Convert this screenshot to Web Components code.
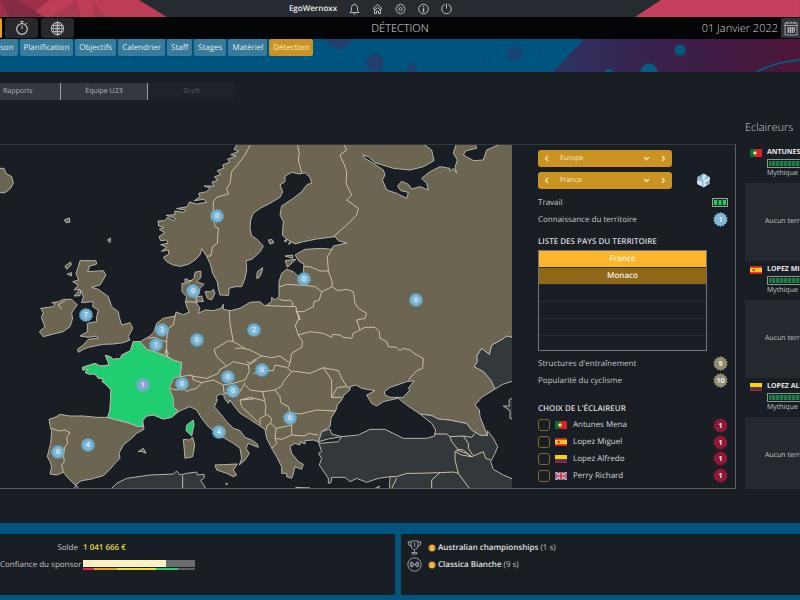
<!DOCTYPE html>
<html lang="fr">
<head>
<meta charset="utf-8">
<title>Détection</title>
<style>
html,body{margin:0;height:100%;background:#191e25}
body{font-family:"Open Sans","Noto Sans",sans-serif;font-size:8px;line-height:12px;color:#c3c5c8;overflow:hidden;text-rendering:geometricPrecision}
</style>
</head>
<body>
<detection-page></detection-page>
<script>
const define=(name,render,setup)=>customElements.define(name,class extends HTMLElement{
  connectedCallback(){
    if(this.shadowRoot)return;
    const root=this.attachShadow({mode:'open'});
    root.innerHTML='<style>*{box-sizing:border-box}button,select,input{font:inherit;color:inherit;text-rendering:inherit;margin:0;border:0;padding:0;background:none}</style>'+render(this);
    if(setup)setup(this,root);
  }
});
const gear=(cx,cy,r,teeth)=>{
  let d='';
  for(let i=0;i<teeth*2;i++){
    const a=i*Math.PI/teeth,q=i%2?r*.84:r;
    d+=(i?'L':'M')+(cx+q*Math.sin(a)).toFixed(2)+' '+(cy-q*Math.cos(a)).toFixed(2);
  }
  return d+'Z';
};

define('level-badge',el=>{
  const c={blue:['#7fb4d3','#a9d0e5'],sand:['#8f8970','#bcb595'],red:['#8d1736','#b01f45']}[el.getAttribute('tone')];
  return `<style>:host{display:block;width:15px;height:15px}svg{display:block}</style>
  <svg width="15" height="15" viewBox="0 0 15 15"><path d="${gear(7.5,7.5,7.4,14)}" fill="${c[0]}"/><circle cx="7.5" cy="7.5" r="4.6" fill="${c[0]}" stroke="${c[1]}" stroke-opacity=".35" stroke-width=".7"/>
  <text x="7.5" y="10" text-anchor="middle" font-size="7" font-weight="700" fill="#f2f2ea">${el.getAttribute('value')}</text></svg>`;
});

const flags={
  pt:'<path fill="#d8232c" d="M0 0h12v9H0z"/><path fill="#0d6b3c" d="M0 0h5v9H0z"/><circle cx="5" cy="4.5" r="2" fill="#e8cf3a"/><circle cx="5" cy="4.5" r="1" fill="#e9e3e3"/>',
  es:'<path fill="#d3202a" d="M0 0h12v9H0z"/><path fill="#fcc71f" d="M0 2h12v5H0z"/><path fill="#b2532c" d="M2.5 3.2h2.4v2.6H2.5z"/>',
  co:'<path fill="#fbd116" d="M0 0h12v5H0z"/><path fill="#263a80" d="M0 5h12v2H0z"/><path fill="#b71c38" d="M0 7h12v2H0z"/>',
  gb:'<path fill="#27407f" d="M0 0h12v9H0z"/><path stroke="#eee" stroke-width="2" d="M0 0l12 9M12 0L0 9"/><path stroke="#cc2338" stroke-width=".7" d="M0 0l12 9M12 0L0 9"/><path stroke="#eee" stroke-width="3" d="M6 0v9M0 4.5h12"/><path stroke="#cc2338" stroke-width="1.6" d="M6 0v9M0 4.5h12"/>'
};
define('flag-icon',el=>`<style>:host{display:block;width:12px;height:8px}svg{display:block}</style>
<svg width="12" height="8" viewBox="0 0 12 9" preserveAspectRatio="none">${flags[el.getAttribute('code')]}</svg>`);

define('top-bar',()=>`<style>
:host{display:grid;grid-template-columns:1fr auto 1fr;background:#262b32;height:17px;align-items:center}
.art{display:block;height:17px;width:100%}
nav{display:flex;align-items:center;gap:12px;padding-right:59px}
strong{color:#eee;font-weight:600}
button{display:block;width:11px;height:12px}
button svg{display:block;width:11px;height:12px;fill:none;stroke:#b9bbbd;stroke-width:1}</style>
<svg class="art" viewBox="0 0 600 17" preserveAspectRatio="xMinYMin slice"><path fill="#bd3d59" d="M0 0h139l28 17H0z"/><path fill="#9d3149" d="M0 0h50L28 17H0z"/><path fill="#842c44" d="M0 0h18L44 17H10z"/><path fill="#ad3852" d="M76 0l-24 17h29zM92 0l14 17H94z"/></svg>
<nav><strong>EgoWernoxx</strong>
<button aria-label="Notifications"><svg viewBox="0 0 11 12"><path d="M1 9.5h9L8.500 7.500V4.500a3 3 0 0 0-6 0v3zM4.500 11h2M5.500 1V.5"/></svg></button>
<button aria-label="Accueil"><svg viewBox="0 0 11 12"><path d="M.8 6L5.500 1.500 10.200 6M2.500 5.500v5h2v-2.500h2v2.500h2v-5M3 7l2.500-2.500L8 7"/></svg></button>
<button aria-label="Options"><svg viewBox="0 0 11 12"><path d="M4.600 1h1.800l.4 1.600 1.400-.8 1.200 1.200-.8 1.400 1.600.7v1.800l-1.600.7.8 1.400-1.200 1.200-1.400-.8-.4 1.600H4.600l-.4-1.600-1.400.8L1.600 9l.8-1.400L.8 6.900V5.100l1.600-.7L1.600 3l1.200-1.200 1.400.8z" stroke-width=".8"/><circle cx="5.500" cy="6" r="1.500"/></svg></button>
<button aria-label="Informations"><svg viewBox="0 0 11 12"><circle cx="5.500" cy="6" r="4.800"/><path d="M5.500 5.200v4M5.500 3v1.200" stroke-width="1.500"/></svg></button>
<button aria-label="Quitter"><svg viewBox="0 0 11 12"><path d="M3.800 1.500a4.800 4.800 0 1 0 3.400 0M5.500.5v5"/></svg></button></nav>
<svg class="art" viewBox="0 0 600 17" preserveAspectRatio="xMaxYMin slice"><path fill="#c5405e" d="M435 17L461 0h139v17z"/></svg>`);

define('title-bar',()=>`<style>
:host{display:grid;grid-template-columns:1fr auto 1fr;background:#040506;height:22px;align-items:center;color:#d2d3d4}
.l,.r{display:flex;align-items:center}.l{gap:3px}
button{width:33px;height:20px;background:#26282b;border-radius:3px;display:grid;place-items:center}
.on{width:2px;background:#e5a21d;border-radius:0 2px 2px 0}
svg{fill:none;stroke:#c4c5c6}
h1{font-size:11px;line-height:16px;font-weight:300;margin:0;padding-top:2px;color:#e0e0e0}
.r{justify-content:flex-end;gap:3px;font-size:11px;line-height:16px;font-weight:300}
.r span{padding-top:2px}
.cal{width:19px;border-radius:2px 0 0 2px;background:#303236}</style>
<div class="l"><button class="on" aria-label="Équipe"></button>
<button aria-label="Chronomètre"><svg width="14" height="16" viewBox="0 0 14 16"><circle cx="7" cy="9" r="5.300" stroke-width="1.200"/><path d="M7 9V5.500M5.500 1.500h3M7 1.500v2M11 4l1-1"/></svg></button>
<button aria-label="Monde"><svg width="15" height="15" viewBox="0 0 15 15"><circle cx="7.500" cy="7.500" r="6.200"/><path d="M7.500 0v15M6 2v11M9 2v11M1.500 7.500h12M2.500 4.500h10M2.500 10.500h10M4 3q-2 4.500 0 9M11 3q2 4.500 0 9" stroke-width=".8"/></svg></button></div>
<h1>DÉTECTION</h1>
<div class="r"><span>01 Janvier 2022</span><button class="cal" aria-label="Calendrier"><svg width="14" height="15" viewBox="0 0 14 15"><path d="M1 2h12v12H1zM1 4.500h12M3.500.5v2M7 .5v2M10.500.5v2M3 7h8M3 9h8M3 11h8M4.500 6v6M6.500 6v6M8.500 6v6M10.500 6v4" stroke-width=".8"/></svg></button></div>`);

define('nav-band',()=>`<style>
:host{display:block;height:33px;background:#00557f;position:relative;overflow:hidden}
svg{position:absolute;right:0;top:0;height:33px;width:800px}
nav{position:relative;display:flex;gap:2px}
button{height:17px;padding:0 4px;border-radius:2px;background:#397b9a;color:#e2eaef;font-weight:500;white-space:nowrap}
button:first-child{padding-left:0}.on{background:#cb9321;color:#f5eedc}</style>
<svg viewBox="0 0 800 33"><defs><linearGradient id="g"><stop offset="0" stop-color="#2c3362"/><stop offset=".35" stop-color="#37244f"/><stop offset=".8" stop-color="#45183f"/><stop offset="1" stop-color="#4d1738"/></linearGradient></defs>
<path d="M553 33L584 0h216v33z" fill="url(#g)"/><g fill="#22406f"><circle cx="339" cy="-3" r="13"/><circle cx="375" cy="24" r="9"/><circle cx="412" cy="29" r="5"/><circle cx="515" cy="14" r="8" opacity=".65"/><circle cx="484" cy="21" r="2" opacity=".6"/><circle cx="541" cy="14" r="2" opacity=".6"/></g>
<g fill="#075a80"><circle cx="680" cy="11" r="5.500"/><circle cx="649" cy="33" r="8.500"/><circle cx="609" cy="35" r="5"/></g><path d="M756 33q22-11 44-12" stroke="#0b577c" stroke-width="2" fill="none"/></svg>
<nav><button>son</button><button>Planification</button><button>Objectifs</button><button>Calendrier</button><button>Staff</button><button>Stages</button><button>Matériel</button><button class="on">Détection</button></nav>`);

define('sub-tabs',()=>`<style>:host{display:flex;gap:0}
button{height:17px;width:87px;background:#343941;color:#b3b5b9;border-right:1px solid #9a9da1;font-size:7px}
.a{width:61px;text-align:left;padding-left:3px}.d{background:#1e232a;color:#555a61;border:0;border-radius:0 3px 3px 0}</style>
<button class="a">Rapports</button><button>Équipe U23</button><button class="d" disabled>Draft</button>`);

/* Map data: each string is a run of x,y pairs relative to one of the four atlas tiles. */
const tiles={A:[0,0],B:[0,510],C:[750,0],D:[750,510]};
const trace=(...runs)=>runs.map(s=>{
  const [ox,oy]=tiles[s[0]],n=s.slice(1).trim().split(/[\s,]+/).map(Number);let o='';
  for(let i=0;i<n.length;i+=2)o+=(n[i]+ox)+' '+(n[i+1]+oy)+' ';
  return o;
}).join('');
const area=(...r)=>'M'+trace(...r)+'Z',line=(...r)=>'M'+trace(...r);
const mainland=area(
 'A712,12 702,28 716,34 692,44 708,48 682,58 690,66 668,75 672,84 652,92 662,104 644,110 652,122 636,126 642,138 612,138 630,144 620,155 596,160 600,170 583,182 612,178 620,187 590,192 568,186 562,200 530,206 558,210 552,217 524,213 525,224 498,226 526,235 520,242 503,232 494,242 474,243 476,258 492,262 478,268 494,278 477,290 482,302 500,300 504,310 482,314 500,322 484,334 506,330 506,343 490,352 500,365 520,375 540,379 565,373 585,360 600,345 605,325 612,338 620,348 632,375 638,400 652,425 655,445 660,465 686,466 687,445 705,440 725,440 735,415 740,390 738,362 755,358 770,345 780,335',
 'C40,318 20,297 5,287 0,265 2,240 10,220 30,205 60,190 90,172 98,155 90,135 105,125 105,108 125,97 150,102 165,98 180,112 185,130 172,133 155,155 130,175 95,198 90,225 100,245 97,285 110,297 135,312 160,305 200,297 255,290 265,302 290,309 250,318 245,328 215,325 165,328 135,345 148,365 162,372 160,395 163,410 145,410 130,395 110,388 95,400 87,425 87,470 75,480 65,472 65,485 45,498 30,485 0,487',
 'A745,490 720,505 690,512 670,508 670,493 663,505 640,512 615,510 595,520 600,505 590,490 588,475 598,460 600,445 612,433 590,425 603,412 602,393 585,397 582,415 572,423 555,416 555,428 577,420 560,432 546,430 546,455 560,470 556,485 562,505 568,516 550,524 528,516 526,528 490,535',
 'B470,40 462,65 450,78 420,95 400,95 395,110 392,122 365,135 362,145 340,148 330,140 316,136 328,165 300,168 285,160 248,172 248,180 265,178 255,187 265,192 285,192 295,205 310,206 306,214 325,230 333,240 330,300 323,322 290,322 250,318 210,318 180,313 165,322 147,328 150,345 155,365 152,400 142,440 150,455 155,470 150,492 170,495 190,487 205,505 225,525 245,512 270,508 310,497 330,478 345,460 360,445 357,430 370,405 395,385 410,370 432,358 430,345 428,332 440,318 460,315 490,327 515,322 535,305 550,298 570,290 590,300 605,325 625,350 650,370 680,388 700,400 720,415 725,445 718,465 735,450 748,430 738,415 745,400 765,408 775,412 772,402 755,390 735,382 720,362 700,355 680,335 660,310 643,290 652,270 648,260 660,252 672,255 673,265 685,280 690,270 700,285 720,310 745,325 775,345',
 'D45,358 50,385 65,415 80,440 95,470 95,490 110,490 110,500 125,505 130,490 135,470 155,478 160,463 145,455 125,430 120,410 135,400 150,405 150,395 165,402 165,392 190,390 205,395 215,365 240,350 243,325 258,300 262,285 275,270 282,255 300,240 300,230 318,225 335,235 375,242 350,255 365,280 380,288 400,275 430,268 445,265 470,285 510,312 545,316 565,327 600,330 650,340 665,360 690,375 712,377 700,345 690,320 688,300 675,285 695,262 735,237 722,210 700,185 672,170 682,155 680,138 695,115 718,133 725,105 750,92 770,78 790,82','C790,5 0,5');
const france=area('B400,95 395,110 392,122 365,135 362,145 340,148 330,140 316,136 328,165 300,168 285,160 248,172 248,180 265,178 255,187 265,192 285,192 295,205 310,206 306,214 325,230 333,240 330,300 323,322 350,330 380,337 410,348 428,350 428,332 440,318 460,315 490,327 515,322 535,303 520,290 520,265 508,235 520,205 540,200 545,158 520,150 500,140 470,128 440,118 420,95');
const islands=[
 'A240,362 288,362 290,372 265,380 268,386 262,395 310,392 318,405 300,435 275,442 295,448 325,470 335,500 355,515 358,532','B365,45 390,38 398,55 385,80 390,90 370,98 340,102 310,103 285,108 265,112 250,118 235,127 232,118 250,105 265,88 295,85 290,78 265,82 240,78 262,65 262,40 290,35','A290,530 295,510 278,500 280,485 245,488 250,470 242,450 240,467 222,468 240,448 222,450 235,435 218,425 236,420 228,400 235,380|',
 'A222,508 215,520','B218,25 210,50 190,65 160,72 130,80 118,65 135,50 125,25','A125,530 130,518 122,505 160,500 165,490 155,488 175,485 190,478 215,478 232,495 222,508|',
 'A-5,85 12,85 18,100 35,110 40,128 32,145 15,158 -5,158|','A193,240 208,234 210,246 198,248|','A322,300 332,294 330,308|','A195,378 212,366 214,375 200,388|','A202,402 215,398 214,408|',
 'A615,455 632,455 640,448 645,460 635,480 622,475|','A585,472 605,468 610,485 592,483|','C20,415 22,395 38,383 35,398 27,413|','C106,362 138,358 112,382|','C105,348 128,345 128,355|','C55,300 65,298 72,308 60,312|','C102,302 112,298 108,306|','C115,312 122,303 120,312|',
 'B550,388 568,390 578,382 584,405 578,440 555,445|','B645,465 712,462 700,480 710,495 700,500 680,490 650,480|','B415,425 430,415 438,430 425,424|','B678,520 682,520 682,523 678,523|','D137,532 180,534 150,537|','D370,538 390,528 380,538|'].join(';;').split('|').map(s=>s.split(';;').filter(Boolean)).filter(a=>a.length).map(a=>area(...a)).join('');
const outer=[
 area('D205,395 210,400 265,395 275,380 325,375 360,358 405,358 430,370 460,385 530,385 553,378 557,360 545,340 510,312 545,316 565,327 600,330 650,340 665,360 690,375 712,377 712,362 730,385 743,410 735,430 722,455 730,478 760,495 790,508 790,545 418,545 420,500 385,505 350,517 320,505 300,515 285,502 245,502 243,518 235,520 235,505 225,490 208,465 215,445 205,430 215,425'),
 area('D205,395 215,365 240,357 245,372 275,380 235,387'),
 area('D790,82 770,78 750,92 725,105 718,133 695,115 680,138 682,155 672,170 700,185 722,210 735,237 760,222 790,213'),
 area('D790,262 777,270 778,288 760,288 780,302 780,325 790,328'),
 area('B325,545 350,520 380,505 450,495 520,492 530,483 540,495 560,490 590,486 592,495 612,493 613,503 602,512 615,530 612,545'),area('B218,545 228,525 243,545')].join('');
const seas=[area('C515,8 545,30 552,62 520,80 480,90 430,85 375,68 355,50 338,45 345,55 370,70 400,90 405,105 397,120 410,150 440,160 470,175 475,157 452,152 443,138 455,124 475,133 485,147 510,140 535,150 530,130 515,115 540,95 570,80 600,85 600,95 610,85 620,100 615,82 622,60 610,40 620,8'),
 area('C675,8 680,25 648,32 640,45 670,62 700,60 710,30 760,8'),
 area('D403,245 420,232 450,222 470,215 492,212 475,235 480,240 470,250 460,262 420,262 405,255')].join('');
const borders=[
 ['A752,12 735,45 712,75 695,95 690,130 680,145 685,162 650,172 640,185 640,225 645,260 655,265 652,310 638,320 632,348 620,348'],['C142,12 148,40 145,60 155,98'],['C280,8 290,30 270,45 285,80 290,95 288,130 305,165 290,180 325,205 320,225 290,255 250,290'],
 ['C248,325 232,350 235,393 245,420 247,440 215,455 195,440 165,436 110,433 87,441'],['C163,380 180,380 210,393 235,393'],['C215,455 208,480 192,485 190,500 160,515 140,515 138,500 50,497'],['C87,478 105,482 120,480 128,487 128,500'],
 ['C140,515 150,540','D138,0 148,20 136,48 145,75 158,95 155,112 125,130 120,160 115,172'],['D145,75 180,65 220,70 245,82 248,73 270,75 280,82 305,85 310,70 330,60'],['C247,440 262,452 290,448 310,455 315,490 325,505 350,520 345,535 320,540','D330,60'],
 ['D330,60 345,52 375,52 388,65 390,85 410,95 415,110 440,112 450,122 460,115 480,120 495,132 520,145 518,175 500,182 475,210'],
 ['D-45,115 -20,115 0,120 35,138 65,143 90,138 120,160'],['D35,138 10,152 0,160 -10,155'],['D10,192 30,182 70,182 75,165 110,172 125,185 100,215 95,228 75,240 38,245 0,240 -15,225'],
 ['D125,183 180,190 220,173 265,182 275,205 290,230 300,235'],['D220,173 245,210 245,262 275,262'],['D245,262 262,232 290,230'],['D75,240 90,260 92,278 115,290 120,308 150,312 200,300 258,303'],['D120,308 125,345 125,375'],
 ['D38,245 48,290 45,310 65,325 62,340 78,355 75,385 95,388 125,375 165,378 175,370 205,375'],['D48,315 30,325 30,345'],['D62,340 52,345 48,360'],['D78,355 122,346'],['D75,385 80,400 65,415'],['D-30,270 0,262 42,272'],['B720,270 725,290 775,337'],['B720,270 760,267'],
 ['B526,15 520,45 505,55 500,90 500,138'],['B445,85 465,82 480,90 500,95'],['B420,95 440,118 470,128 500,138 520,150 545,158 540,200'],['B495,132 498,118 505,130 500,138'],
 ['B540,200 575,195 580,210 605,218 590,235 570,240 560,245 550,235 530,240 508,235'],['B575,198 620,205 655,190 660,178 680,168'],['B605,218 640,210 670,225'],['A688,510','B690,40 700,95 685,92 660,108 642,118 650,140 680,168 700,155 745,165 770,150'],['B700,95 735,115'],
 ['B745,165 748,185 735,210 700,220 670,225 672,250 700,250 720,245 735,218'],['B323,322 350,330 380,337 410,348 428,350'],['B155,355 175,363 195,360 210,368 200,382 203,400 195,410 190,435 193,455 185,465 190,487'],['A558,485 595,487'],['A185,508 175,495 195,482'],
 ['B548,497 548,540'],['D553,372 590,372 600,380 605,395 625,420 615,425 615,450 625,490 660,538'],['D600,380 640,378 665,382 675,370'],['D640,378 655,400 655,415 668,435'],['D620,420 650,430 665,440 700,425 707,445 722,450'],['D615,425 635,435 665,440 640,420 625,418'],['D420,500 440,500 470,490 500,490 570,488 610,486 625,490'],['D570,488 545,510 545,538'],['D425,535 440,505']].map(a=>line(...a)).join('');
const pins=[[217,216,0],[193,291,0],[304,279,0],[416,300,0],[86,315,7],[162,330,3],[156,345,1],[197,340,0],[254,330,2],[143,385,1],[182,384,0],[228,377,0],[262,370,0],[233,391,0],[290,418,0],[219,432,4],[88,445,4],[58,452,0]];
define('europe-map',()=>`<style>:host{display:block;overflow:hidden;min-width:0}svg{display:block;width:100%;height:100%}
path{stroke-linejoin:round}text{font-weight:600;fill:#eef6fb;font-size:20px;text-anchor:middle}</style>
<svg viewBox="0 15 1536 1032" preserveAspectRatio="xMinYMin slice" role="img" aria-label="Europe"><g stroke="#b4b3aa" stroke-width="3">
<path d="${outer}" fill="#33383b"/><path d="${mainland}${islands}" fill="#6b6551"/><path d="${seas}" fill="#191e25"/><path d="${borders}" fill="none" stroke="#c9c1a5"/>
<path d="${france}${area('B580,330 582,345 575,378 558,362 560,345')}" fill="#20cd70"/></g>
${pins.map(([x,y,n])=>`<path d="${gear(x*3,(y-140)*3,22,14)}" fill="#6badd0" fill-opacity=".95"/><circle cx="${x*3}" cy="${(y-140)*3}" r="14" fill="${x==143?'#8da5ce':'#82b9d8'}"/><text x="${x*3}" y="${(y-140)*3+7}">${n}</text>`).join('')}</svg>`);

define('gold-picker',el=>`<style>:host{display:flex;align-items:center;background:#cb9321;border-radius:3px;height:17px;color:#f7edd7}
button{width:17px;height:17px;display:grid;place-items:center}select{appearance:none;flex:1;min-width:0;height:17px;padding:1px 0 0 5px;outline:0;font-size:7px}
svg{fill:none;stroke:#f5e6bd;stroke-width:1.300}.v{pointer-events:none;margin-right:5px}</style>
<button aria-label="Précédent"><svg width="5" height="7"><path d="M4 1L1.500 3.500 4 6"/></svg></button>
<select aria-label="${el.getAttribute('label')}"><option>${el.getAttribute('value')}</option></select>
<svg class="v" width="7" height="5"><path d="M1 1l2.500 2.500L6 1"/></svg>
<button aria-label="Suivant"><svg width="5" height="7"><path d="M1 1l2.500 2.500L1 6"/></svg></button>`);

define('territory-panel',()=>`<style>
:host{display:block;padding:5px 7px 0 26px}
.pick{display:grid;grid-template-columns:134px auto 1fr;column-gap:24px;row-gap:5px}
.pick gold-picker{grid-column:1}.pick button{align-self:center;grid-row:2;grid-column:2}.pick svg{display:block}
.row{display:flex;justify-content:space-between;align-items:center;height:17px}
.first{margin-top:5px}
h2{font-size:8px;line-height:12px;font-weight:600;margin:0;color:#d8d9da}
.t1{margin-top:8px}.t2{margin:14px 0 2px}
.list{width:169px;height:101px;margin:2px 0 4px;border:1px solid #73777c}
table{width:100%;border-spacing:0;text-align:center;font-weight:600;color:#f5f0e2;table-layout:fixed}
td{padding:0;height:17px;line-height:12px;border-bottom:1px solid #262b32}
tr:last-child td{height:14px;border:0}
.y td{background:#fdb62a}.b td{background:#8e6817}
ul{list-style:none;margin:0;padding:0;display:grid;grid-template-rows:repeat(4,1fr);height:67px}
li{display:flex;align-items:center}label{display:flex;align-items:center;flex:1;gap:5px;color:#d7d8da}label flag-icon{margin-right:1px}
input{appearance:none;width:12px;height:12px;border:1px solid #80672c;border-radius:3px}
</style>
<div class="pick"><gold-picker label="Continent" value="Europe"></gold-picker><gold-picker label="Pays" value="France"></gold-picker>
<button aria-label="Au hasard"><svg width="15" height="15" viewBox="0 0 15 15"><path fill="#8fbbd4" d="M7.500.5l6.200 3.500v7l-6.200 3.500L1.300 11V4z"/><path fill="#d5e6ef" d="M7.500.5l3 1.700-3 5.300-2-3 2-1.500zM7.500 7.500l6.200-3.500v3l-3 1.500-.5 4L7.500 14.500zM1.300 7l3 1 2 2-1 3-4-2z"/><path fill="#4e87ae" d="M3.500 4l2-1v2zM9 10l2-1v2z"/></svg></button></div>
<div class="row first"><span>Travail</span><svg width="16" height="9"><path d="M.5.5h15v8H.500z" fill="#10341f" stroke="#9ba7a0"/><path d="M2 2h3v5H2zM6.500 2h3v5h-3zM11 2h3v5h-3z" fill="#28c966"/></svg></div>
<div class="row"><span>Connaissance du territoire</span><level-badge tone="blue" value="1"></level-badge></div>
<h2 class="t1">LISTE DES PAYS DU TERRITOIRE</h2>
<div class="list"><table aria-label="Pays du territoire"><tr class="y"><td>France</td></tr><tr class="b"><td>Monaco</td></tr><tr><td></td></tr><tr><td></td></tr><tr><td></td></tr><tr><td></td></tr></table></div>
<div class="row"><span>Structures d'entraînement</span><level-badge tone="sand" value="9"></level-badge></div>
<div class="row"><span>Popularité du cyclisme</span><level-badge tone="sand" value="10"></level-badge></div>
<h2 class="t2">CHOIX DE L'ÉCLAIREUR</h2>
<ul>${[['pt','Antunes Mena'],['es','Lopez Miguel'],['co','Lopez Alfredo'],['gb','Perry Richard']].map(([f,n])=>`<li><label><input type="checkbox"><flag-icon code="${f}"></flag-icon>${n}</label><level-badge tone="red" value="1"></level-badge></li>`).join('')}</ul>`);

define('scout-card',el=>`<style>:host{display:block;height:117px;flex:none;overflow:hidden;white-space:nowrap;font-size:7px}
.h{display:grid;grid-template-columns:12px 1fr;column-gap:5px;padding:3px 0 0 5px;height:39px;align-content:start;align-items:center}
b{font-weight:700;color:#e6e6e7}.g{grid-column:2;height:9px;border:1px solid #8a9a91;border-right:0;background:repeating-linear-gradient(90deg,#1d7c48 0 3px,#124a2e 3px 4px);background-clip:content-box;padding:1px}
.m{grid-column:2}.e{background:#242930;height:78px;display:flex;align-items:center;padding-left:20px}</style>
<div class="h"><flag-icon code="${el.getAttribute('flag')}"></flag-icon><b><slot></slot></b><div class="g"></div><span class="m">Mythique</span></div><div class="e">Aucun territoire</div>`);

define('finance-panel',()=>`<style>:host{display:grid;grid-template-columns:78px auto;column-gap:5px;row-gap:5px;align-content:start;background:#191e25;padding:8px 0}
span{text-align:right;white-space:nowrap}b{color:#e2d84c;font-weight:600}
.bar{width:112px;padding-top:1px}.v{height:7px;background:linear-gradient(90deg,#fdf1c4 74%,#6b6c6d 74%)}
.s{height:2px;margin-top:1px;background:linear-gradient(90deg,#d42b55 10%,#dba629 10% 30%,#e9dc3e 30% 65%,#2fc96e 65% 85%,#596067 85%)}</style>
<span>Solde</span><b>1 041 666 €</b><span>Confiance du sponsor</span><div class="bar" role="meter" aria-label="Confiance du sponsor" aria-valuenow="74"><div class="v"></div><div class="s"></div></div>`);

define('race-list',()=>`<style>:host{display:block;background:#191e25;padding:5px 6px}
div{display:flex;align-items:center;height:17px;white-space:nowrap}svg{flex:none}.i{margin-right:6px}.c{margin-right:2px}b{font-weight:600;color:#e1e2e3;margin-right:2px}
.i{fill:none;stroke:#a7a9ac;stroke-width:.9}</style>
<div><svg class="i" width="15" height="15" viewBox="0 0 15 15"><path d="M4 1h7v4q0 4-3.500 5Q4 9 4 5zM4 2H1q0 4 3.500 4.500M11 2h3q0 4-3.500 4.500M7.500 10v2.500M5 14v-1.500h5V14z"/><path d="M6.800 3.500l.9-.6v4"/></svg><svg class="c" width="8" height="8"><circle cx="4" cy="4" r="3.500" fill="#dba02a"/><path d="M4 2v1M4 3.700v2.500" stroke="#fff0c6" stroke-width="1.200"/></svg><b>Australian championships</b><span>(1 s)</span></div>
<div><svg class="i" width="15" height="15" viewBox="0 0 15 15"><circle cx="7.500" cy="7.500" r="6.700"/><ellipse cx="4.800" cy="7.500" rx="1.600" ry="2.500"/><ellipse cx="10.200" cy="7.500" rx="1.600" ry="2.500"/><path d="M4.800 5v5M10.200 5v5M6.400 7.500h2.200"/></svg><svg class="c" width="8" height="8"><circle cx="4" cy="4" r="3.500" fill="#dba02a"/><path d="M4 2v1M4 3.700v2.500" stroke="#fff0c6" stroke-width="1.200"/></svg><b>Classica Bianche</b><span>(9 s)</span></div>`);

define('detection-page',()=>`<style>
:host{display:flex;flex-direction:column;min-height:100vh}
sub-tabs{margin-top:11px}
main{flex:1;display:grid;grid-template-columns:minmax(0,1fr) 55px;column-gap:9px;grid-template-rows:44px 345px 34px;min-height:0}
aside{grid-row:1/3;grid-column:2;display:flex;flex-direction:column;overflow:hidden}
h2{font-size:11px;line-height:16px;font-weight:300;margin:20px 0 8px;color:#cdced0;flex:none}
.p{grid-row:2;display:grid;grid-template-columns:minmax(0,1fr) 223px;border:1px solid #5d6166;border-left:0;border-top:1px solid #343940;min-width:0;overflow:hidden}
footer{background:#00557f;padding:11px 0 5px;display:grid;grid-template-columns:395fr 399fr;column-gap:6px;height:77px}
</style>
<top-bar></top-bar><title-bar></title-bar><nav-band></nav-band><sub-tabs></sub-tabs>
<main><section class="p"><europe-map></europe-map><territory-panel></territory-panel></section>
<aside><h2>Eclaireurs</h2><scout-card flag="pt">ANTUNES MENA</scout-card><scout-card flag="es">LOPEZ MIGUEL</scout-card><scout-card flag="co">LOPEZ ALFREDO</scout-card></aside></main>
<footer><finance-panel></finance-panel><race-list></race-list></footer>`);
</script>
</body>
</html>
